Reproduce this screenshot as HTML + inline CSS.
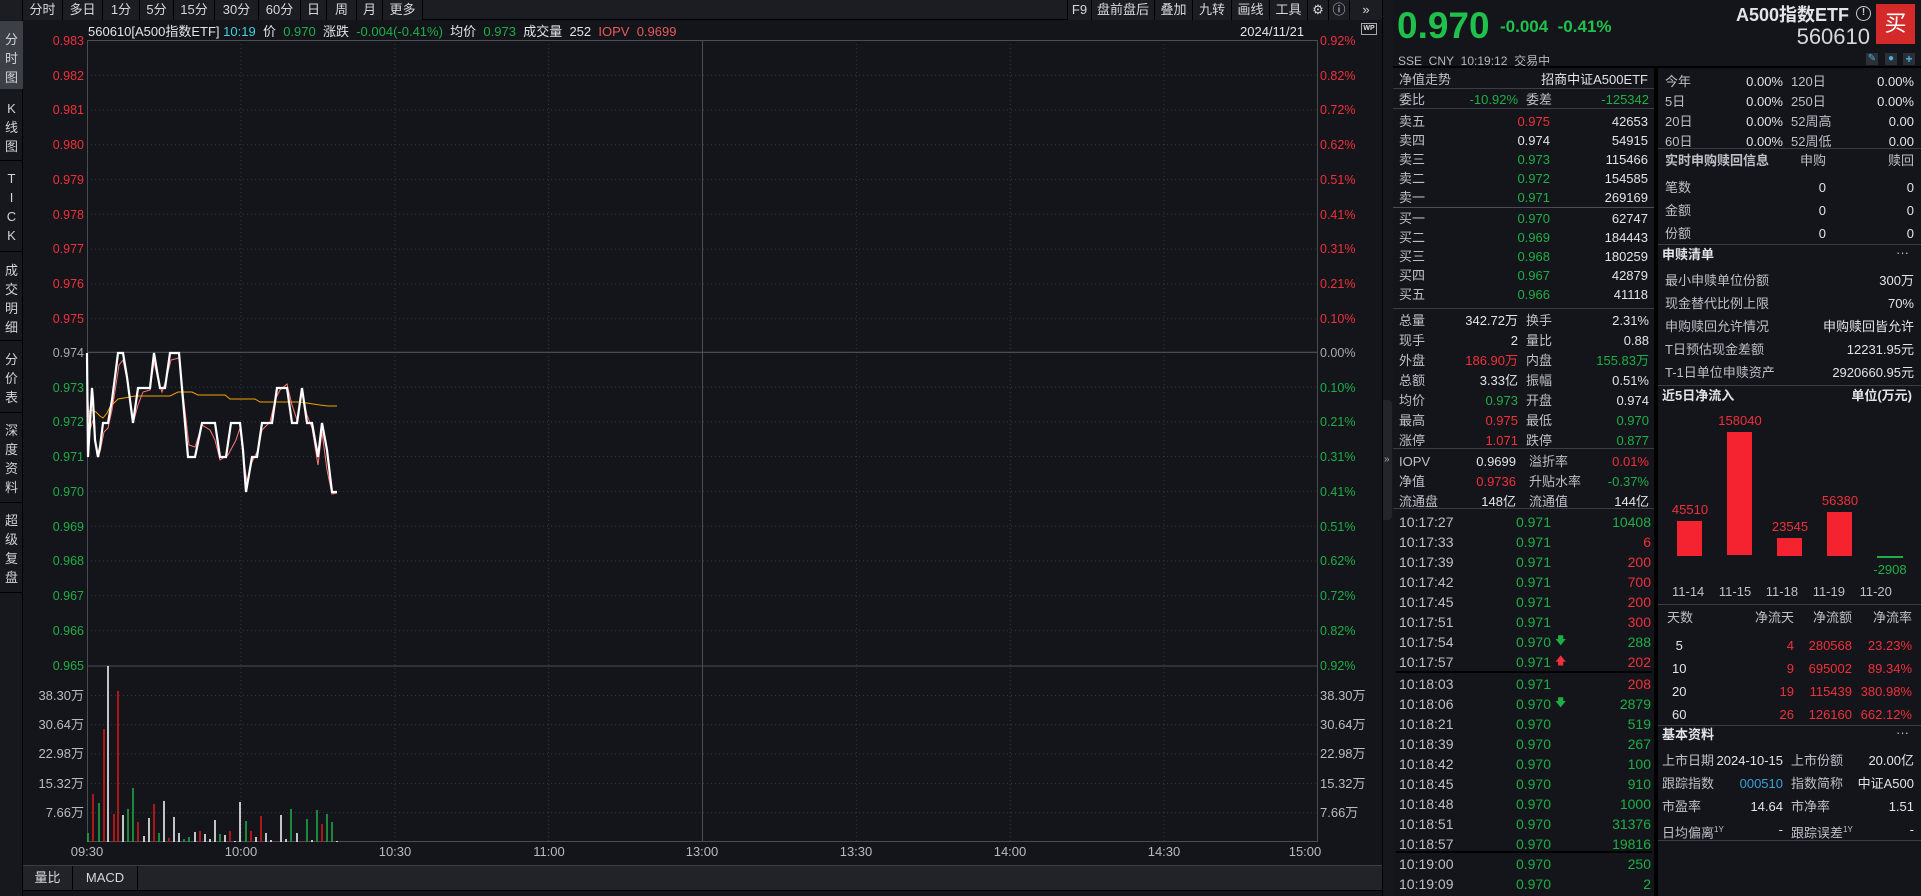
<!DOCTYPE html>
<html><head><meta charset="utf-8">
<style>
*{margin:0;padding:0;box-sizing:border-box}
body{width:1921px;height:896px;background:#13151a;position:relative;overflow:hidden;font-family:"Liberation Sans","Noto Sans CJK SC",sans-serif;color:#c9ccd2;font-size:13px}
.a{position:absolute;white-space:nowrap;line-height:16px}
.g{color:#1fae46}.r{color:#f0303a}.w{color:#e2e4e8}.l{color:#bcc0c7}
.hl{position:absolute;height:1px;background:#3a3d44}
.t{font-size:14px}
.nav{position:absolute;left:0;width:23px;text-align:center;color:#d0d3d8;font-size:13px}
.tb{position:absolute;top:0;height:20px;line-height:20px;text-align:center;border-right:1px solid #000;color:#d6d8dc;font-size:13px;background:#1b1d22;white-space:nowrap;overflow:visible}
</style></head><body>
<div style="position:absolute;left:0;top:0;width:1383px;height:20px;background:#1b1d22;border-bottom:1px solid #000"></div>
<div class="tb" style="left:0;width:23px"></div>
<div class="tb" style="left:23px;width:40px">分时</div>
<div class="tb" style="left:63px;width:40px">多日</div>
<div class="tb" style="left:103px;width:37px">1分</div>
<div class="tb" style="left:140px;width:34px">5分</div>
<div class="tb" style="left:174px;width:41px">15分</div>
<div class="tb" style="left:215px;width:44px">30分</div>
<div class="tb" style="left:259px;width:42px">60分</div>
<div class="tb" style="left:301px;width:26px">日</div>
<div class="tb" style="left:327px;width:30px">周</div>
<div class="tb" style="left:357px;width:26px">月</div>
<div class="tb" style="left:383px;width:40px">更多</div>
<div class="tb" style="left:1067px;width:25px;border-left:1px solid #000">F9</div>
<div class="tb" style="left:1092px;width:63px">盘前盘后</div>
<div class="tb" style="left:1155px;width:38px">叠加</div>
<div class="tb" style="left:1193px;width:39px">九转</div>
<div class="tb" style="left:1232px;width:38px">画线</div>
<div class="tb" style="left:1270px;width:38px">工具</div>
<div class="tb" style="left:1308px;width:21px">⚙</div>
<div class="tb" style="left:1329px;width:21px">ⓘ</div>
<div class="tb" style="left:1350px;width:33px">»</div>
<div style="position:absolute;left:0;top:20px;width:23px;height:876px;background:#16181d;border-right:1px solid #000"></div>
<div style="position:absolute;left:0;top:21px;width:23px;height:68px;background:#3c3f46"></div>
<div class="nav" style="top:30px;line-height:19px">分<br>时<br>图</div>
<div class="nav" style="top:99px;line-height:19px">K<br>线<br>图</div>
<div class="nav" style="top:169px;line-height:19px">T<br>I<br>C<br>K</div>
<div class="nav" style="top:261px;line-height:19px">成<br>交<br>明<br>细</div>
<div class="nav" style="top:350px;line-height:19px">分<br>价<br>表</div>
<div class="nav" style="top:421px;line-height:19px">深<br>度<br>资<br>料</div>
<div class="nav" style="top:511px;line-height:19px">超<br>级<br>复<br>盘</div>
<div class="hl" style="left:0;width:23px;top:160px;background:#000"></div>
<div class="hl" style="left:0;width:23px;top:251px;background:#000"></div>
<div class="hl" style="left:0;width:23px;top:340px;background:#000"></div>
<div class="hl" style="left:0;width:23px;top:412px;background:#000"></div>
<div class="hl" style="left:0;width:23px;top:502px;background:#000"></div>
<div class="hl" style="left:0;width:23px;top:592px;background:#000"></div>
<div class="a" style="left:88px;top:24px">
<span class="w">560610[A500指数ETF]</span> <span style="color:#3fd3e0">10:19</span>&nbsp; <span class="w">价</span>&nbsp; <span class="g">0.970</span>&nbsp; <span class="w">涨跌</span>&nbsp; <span class="g">-0.004(-0.41%)</span>&nbsp; <span class="w">均价</span>&nbsp; <span class="g">0.973</span>&nbsp; <span class="w">成交量</span>&nbsp; <span class="w">252</span>&nbsp; <span style="color:#e85a5a">IOPV</span>&nbsp; <span style="color:#e85a5a">0.9699</span></div>
<div class="a w" style="left:1240px;top:24px;font-size:13px">2024/11/21</div>
<div class="a" style="left:1361px;top:23px;width:16px;height:12px;border:1px solid #aaa;font-size:7px;line-height:10px;text-align:center;color:#ddd;font-weight:bold">WP</div>
<svg style="position:absolute;left:0;top:0" width="1383" height="896" font-family="Liberation Sans" font-size="12">
<g stroke="#34373e" stroke-dasharray="1,3" stroke-width="1">
<line x1="87" y1="75.2" x2="1317" y2="75.2"/><line x1="87" y1="110" x2="1317" y2="110"/><line x1="87" y1="144.7" x2="1317" y2="144.7"/><line x1="87" y1="179.5" x2="1317" y2="179.5"/><line x1="87" y1="214.3" x2="1317" y2="214.3"/><line x1="87" y1="249.1" x2="1317" y2="249.1"/><line x1="87" y1="283.9" x2="1317" y2="283.9"/><line x1="87" y1="318.7" x2="1317" y2="318.7"/>
<line x1="87" y1="387.1" x2="1317" y2="387.1"/><line x1="87" y1="421.9" x2="1317" y2="421.9"/><line x1="87" y1="456.6" x2="1317" y2="456.6"/><line x1="87" y1="491.4" x2="1317" y2="491.4"/><line x1="87" y1="526.2" x2="1317" y2="526.2"/><line x1="87" y1="561" x2="1317" y2="561"/><line x1="87" y1="595.8" x2="1317" y2="595.8"/><line x1="87" y1="630.6" x2="1317" y2="630.6"/>
<line x1="87" y1="695.5" x2="1317" y2="695.5"/><line x1="87" y1="724.8" x2="1317" y2="724.8"/><line x1="87" y1="754" x2="1317" y2="754"/><line x1="87" y1="783.4" x2="1317" y2="783.4"/><line x1="87" y1="812.7" x2="1317" y2="812.7"/>
<line x1="240.9" y1="40" x2="240.9" y2="842"/><line x1="394.8" y1="40" x2="394.8" y2="842"/><line x1="548.6" y1="40" x2="548.6" y2="842"/><line x1="856.4" y1="40" x2="856.4" y2="842"/><line x1="1010.3" y1="40" x2="1010.3" y2="842"/><line x1="1164.1" y1="40" x2="1164.1" y2="842"/>
</g>
<g stroke="#4a4d54" fill="none"><rect x="87.5" y="40.5" width="1230" height="801"/><line x1="87" y1="666" x2="1317" y2="666"/><line x1="702.5" y1="40" x2="702.5" y2="842"/><line x1="87" y1="352.3" x2="1317" y2="352.3" stroke="#5a5d64"/></g>
<g text-anchor="end" font-size="12.5">
<text x="84" y="45" fill="#f0303a">0.983</text><text x="84" y="80" fill="#f0303a">0.982</text><text x="84" y="114" fill="#f0303a">0.981</text><text x="84" y="149" fill="#f0303a">0.980</text><text x="84" y="184" fill="#f0303a">0.979</text><text x="84" y="219" fill="#f0303a">0.978</text><text x="84" y="253" fill="#f0303a">0.977</text><text x="84" y="288" fill="#f0303a">0.976</text><text x="84" y="323" fill="#f0303a">0.975</text><text x="84" y="357" fill="#a8abb0">0.974</text>
<text x="84" y="392" fill="#1fae46">0.973</text><text x="84" y="426" fill="#1fae46">0.972</text><text x="84" y="461" fill="#1fae46">0.971</text><text x="84" y="496" fill="#1fae46">0.970</text><text x="84" y="531" fill="#1fae46">0.969</text><text x="84" y="565" fill="#1fae46">0.968</text><text x="84" y="600" fill="#1fae46">0.967</text><text x="84" y="635" fill="#1fae46">0.966</text><text x="84" y="670" fill="#1fae46">0.965</text>
<g fill="#b8bcc2" font-size="13"><text x="84" y="700">38.30万</text><text x="84" y="729">30.64万</text><text x="84" y="758">22.98万</text><text x="84" y="788">15.32万</text><text x="84" y="817">7.66万</text></g>
</g>
<g font-size="12.5">
<g fill="#f0303a"><text x="1320" y="45">0.92%</text><text x="1320" y="80">0.82%</text><text x="1320" y="114">0.72%</text><text x="1320" y="149">0.62%</text><text x="1320" y="184">0.51%</text><text x="1320" y="219">0.41%</text><text x="1320" y="253">0.31%</text><text x="1320" y="288">0.21%</text><text x="1320" y="323">0.10%</text></g>
<text x="1320" y="357" fill="#a8abb0">0.00%</text>
<g fill="#1fae46"><text x="1320" y="392">0.10%</text><text x="1320" y="426">0.21%</text><text x="1320" y="461">0.31%</text><text x="1320" y="496">0.41%</text><text x="1320" y="531">0.51%</text><text x="1320" y="565">0.62%</text><text x="1320" y="600">0.72%</text><text x="1320" y="635">0.82%</text><text x="1320" y="670">0.92%</text></g>
<g fill="#b8bcc2" font-size="13"><text x="1320" y="700">38.30万</text><text x="1320" y="729">30.64万</text><text x="1320" y="758">22.98万</text><text x="1320" y="788">15.32万</text><text x="1320" y="817">7.66万</text></g>
<g fill="#b8bcc2" text-anchor="middle" font-size="13"><text x="87" y="856">09:30</text><text x="241" y="856">10:00</text><text x="395" y="856">10:30</text><text x="549" y="856">11:00</text><text x="702" y="856">13:00</text><text x="856" y="856">13:30</text><text x="1010" y="856">14:00</text><text x="1164" y="856">14:30</text><text x="1305" y="856">15:00</text></g>
</g>
<polyline fill="none" stroke="#f5a000" stroke-width="1" points="88,412 92,410 96,412 100,416 103,418 107,413 110,407 114,403 118,399 124,398 130,397 135,396 150,396 170,396 178,392 192,392 198,395 225,395 230,399 255,399 260,402 300,402 320,405 328,406 337,406"/>
<polyline fill="none" stroke="#ff7777" stroke-width="1" points="88,400 90,430 93,420 97,455 100,452 104,432 108,428 112,410 116,385 119,365 123,360 127,380 131,410 134,420 138,405 143,392 150,390 154,362 158,380 162,392 166,380 171,360 179,358 184,402 189,445 195,447 202,425 210,430 215,440 220,460 228,455 236,440 240,428 243,455 247,482 252,462 258,450 262,430 270,422 275,400 280,390 287,384 292,405 297,420 302,393 307,415 312,428 318,465 322,432 327,470 332,494 337,493"/>
<polyline fill="none" stroke="#ffffff" stroke-width="2.2" stroke-linejoin="miter" points="87,353 88,457 92,388 93,400 95,440 98,457 100,447 103,423 108,423 112,400 115,377 118,353 123,353 127,377 130,400 133,423 138,388 150,388 154,353 158,377 160,388 165,388 170,353 179,353 183,400 188,457 195,457 202,423 215,423 220,457 226,457 231,423 240,423 243,450 246,492 252,457 257,457 262,423 272,423 277,388 287,388 292,423 297,423 302,388 307,423 312,423 318,457 322,423 327,450 332,492 337,492"/>
<g stroke-width="1.5">
<line x1="88" y1="842" x2="88" y2="833" stroke="#1fae46"/><line x1="93" y1="842" x2="93" y2="794" stroke="#e01818"/><line x1="99" y1="842" x2="99" y2="803" stroke="#1fae46"/><line x1="104" y1="842" x2="104" y2="729" stroke="#e01818"/><line x1="108" y1="842" x2="108" y2="666" stroke="#fff"/><line x1="114" y1="842" x2="114" y2="814" stroke="#e01818"/><line x1="118" y1="842" x2="118" y2="691" stroke="#e01818"/><line x1="123" y1="842" x2="123" y2="815" stroke="#fff"/><line x1="128" y1="842" x2="128" y2="809" stroke="#1fae46"/><line x1="133" y1="842" x2="133" y2="788" stroke="#1fae46"/><line x1="138" y1="842" x2="138" y2="822" stroke="#e01818"/><line x1="144" y1="842" x2="144" y2="836" stroke="#fff"/><line x1="149" y1="842" x2="149" y2="818" stroke="#fff"/><line x1="154" y1="842" x2="154" y2="804" stroke="#e01818"/><line x1="159" y1="842" x2="159" y2="833" stroke="#1fae46"/><line x1="164" y1="842" x2="164" y2="801" stroke="#fff"/><line x1="169" y1="842" x2="169" y2="838" stroke="#e01818"/><line x1="174" y1="842" x2="174" y2="817" stroke="#fff"/><line x1="179" y1="842" x2="179" y2="833" stroke="#fff"/><line x1="184" y1="842" x2="184" y2="839" stroke="#1fae46"/><line x1="189" y1="842" x2="189" y2="837" stroke="#1fae46"/><line x1="195" y1="842" x2="195" y2="832" stroke="#fff"/><line x1="200" y1="842" x2="200" y2="831" stroke="#e01818"/><line x1="205" y1="842" x2="205" y2="834" stroke="#fff"/><line x1="210" y1="842" x2="210" y2="839" stroke="#fff"/><line x1="215" y1="842" x2="215" y2="820" stroke="#fff"/><line x1="220" y1="842" x2="220" y2="834" stroke="#1fae46"/><line x1="225" y1="842" x2="225" y2="835" stroke="#fff"/><line x1="230" y1="842" x2="230" y2="831" stroke="#e01818"/><line x1="235" y1="842" x2="235" y2="841" stroke="#fff"/><line x1="240" y1="842" x2="240" y2="802" stroke="#fff"/><line x1="246" y1="842" x2="246" y2="821" stroke="#1fae46"/><line x1="251" y1="842" x2="251" y2="831" stroke="#e01818"/><line x1="256" y1="842" x2="256" y2="837" stroke="#fff"/><line x1="261" y1="842" x2="261" y2="816" stroke="#e01818"/><line x1="266" y1="842" x2="266" y2="833" stroke="#fff"/><line x1="271" y1="842" x2="271" y2="840" stroke="#fff"/><line x1="276" y1="842" x2="276" y2="841" stroke="#e01818"/><line x1="281" y1="842" x2="281" y2="815" stroke="#fff"/><line x1="286" y1="842" x2="286" y2="839" stroke="#fff"/><line x1="291" y1="842" x2="291" y2="809" stroke="#1fae46"/><line x1="297" y1="842" x2="297" y2="833" stroke="#fff"/><line x1="302" y1="842" x2="302" y2="841" stroke="#e01818"/><line x1="307" y1="842" x2="307" y2="819" stroke="#1fae46"/><line x1="312" y1="842" x2="312" y2="840" stroke="#fff"/><line x1="317" y1="842" x2="317" y2="810" stroke="#1fae46"/><line x1="322" y1="842" x2="322" y2="824" stroke="#e01818"/><line x1="327" y1="842" x2="327" y2="814" stroke="#1fae46"/><line x1="332" y1="842" x2="332" y2="822" stroke="#1fae46"/><line x1="337" y1="842" x2="337" y2="841" stroke="#fff"/>
</g>
</svg>
<div style="position:absolute;left:23px;top:865px;width:1359px;height:26px;background:#222328;border-top:1px solid #3a3d44;border-bottom:1px solid #000"></div>
<div class="a" style="left:23px;top:866px;width:50px;height:24px;line-height:24px;text-align:center;border-right:1px solid #000;color:#d6d8dc">量比</div>
<div class="a" style="left:73px;top:866px;width:65px;height:24px;line-height:24px;text-align:center;border-right:1px solid #000;color:#d6d8dc">MACD</div>
<div style="position:absolute;left:1382px;top:0;width:11px;height:896px;background:#15171c;border-left:1px solid #000"></div>
<div style="position:absolute;left:1383px;top:400px;width:9px;height:120px;background:#23252b;border-radius:0 4px 4px 0"></div>
<div class="a" style="left:1384px;top:452px;font-size:10px;color:#aaa">»</div>
<div style="position:absolute;left:1654px;top:68px;width:4px;height:828px;background:#000"></div>
<div class="a g" style="left:1397px;top:6px;font-size:37px;line-height:40px;font-weight:bold;color:#1fc04c">0.970</div>
<div class="a g" style="left:1500px;top:17px;font-size:17px;line-height:20px;font-weight:bold;color:#1fc04c">-0.004&nbsp; -0.41%</div>
<div class="a w" style="right:72px;top:5px;font-size:18px;line-height:20px;font-weight:bold">A500指数ETF</div>
<div class="a" style="left:1856px;top:6px;width:15px;height:15px;border:1.5px solid #ccc;border-radius:50%;font-size:10px;line-height:12px;text-align:center;color:#ccc;font-weight:bold">!</div>
<div class="a" style="right:51px;top:25px;font-size:22px;line-height:24px;color:#d6d8dc">560610</div>
<div class="a" style="left:1876px;top:4px;width:39px;height:40px;background:#d42a2a;color:#fff;font-size:22px;line-height:40px;text-align:center">买</div>
<div class="a" style="left:1398px;top:53px;font-size:12px;color:#b4b8be">SSE&nbsp; CNY&nbsp; 10:19:12&nbsp; 交易中</div>
<div class="a" style="left:1866px;top:53px;width:12px;height:12px;background:#2b3036;color:#4ab0e0;font-size:10px;line-height:12px;text-align:center">✎</div>
<div class="a" style="left:1885px;top:53px;width:12px;height:12px;background:#2b3036;color:#4ab0e0;font-size:10px;line-height:12px;text-align:center">●</div>
<div class="a" style="left:1903px;top:53px;width:12px;height:12px;background:#2b3036;color:#4ab0e0;font-size:12px;line-height:12px;text-align:center;font-weight:bold">+</div>
<div style="position:absolute;left:1393px;top:66px;width:528px;height:2px;background:#000"></div>
<div class="a l" style="left:1399px;top:72px">净值走势</div><div class="a w" style="right:273px;top:72px">招商中证A500ETF</div>
<div class="hl" style="left:1393px;width:261px;top:88px"></div>
<div class="a l" style="left:1399px;top:92px">委比</div><div class="a g" style="right:403px;top:92px">-10.92%</div><div class="a l" style="left:1526px;top:92px">委差</div><div class="a g" style="right:272px;top:92px">-125342</div>
<div class="hl" style="left:1393px;width:261px;top:108px"></div>
<div class="a l" style="left:1399px;top:112px;line-height:19px">卖五<br>卖四<br>卖三<br>卖二<br>卖一</div>
<div class="a" style="right:371px;top:112px;line-height:19px;text-align:right"><span class="r">0.975</span><br><span class="w">0.974</span><br><span class="g">0.973</span><br><span class="g">0.972</span><br><span class="g">0.971</span></div>
<div class="a w" style="right:273px;top:112px;line-height:19px;text-align:right">42653<br>54915<br>115466<br>154585<br>269169</div>
<div class="hl" style="left:1393px;width:261px;top:207px;background:#4a4d54"></div>
<div class="a l" style="left:1399px;top:209px;line-height:19px">买一<br>买二<br>买三<br>买四<br>买五</div>
<div class="a g" style="right:371px;top:209px;line-height:19px;text-align:right">0.970<br>0.969<br>0.968<br>0.967<br>0.966</div>
<div class="a w" style="right:273px;top:209px;line-height:19px;text-align:right">62747<br>184443<br>180259<br>42879<br>41118</div>
<div class="hl" style="left:1393px;width:261px;top:308px"></div>
<div class="a l" style="left:1399px;top:311px;line-height:20px">总量<br>现手<br>外盘<br>总额<br>均价<br>最高<br>涨停</div>
<div class="a" style="right:403px;top:311px;line-height:20px;text-align:right"><span class="w">342.72万</span><br><span class="w">2</span><br><span class="r">186.90万</span><br><span class="w">3.33亿</span><br><span class="g">0.973</span><br><span class="r">0.975</span><br><span class="r">1.071</span></div>
<div class="a l" style="left:1526px;top:311px;line-height:20px">换手<br>量比<br>内盘<br>振幅<br>开盘<br>最低<br>跌停</div>
<div class="a" style="right:272px;top:311px;line-height:20px;text-align:right"><span class="w">2.31%</span><br><span class="w">0.88</span><br><span class="g">155.83万</span><br><span class="w">0.51%</span><br><span class="w">0.974</span><br><span class="g">0.970</span><br><span class="g">0.877</span></div>
<div class="hl" style="left:1393px;width:261px;top:448px"></div>
<div class="a l" style="left:1399px;top:452px;line-height:20px">IOPV<br>净值<br>流通盘</div>
<div class="a" style="right:405px;top:452px;line-height:20px;text-align:right"><span class="w">0.9699</span><br><span class="r">0.9736</span><br><span class="w">148亿</span></div>
<div class="a l" style="left:1529px;top:452px;line-height:20px">溢折率<br>升贴水率<br>流通值</div>
<div class="a" style="right:272px;top:452px;line-height:20px;text-align:right"><span class="r">0.01%</span><br><span class="g">-0.37%</span><br><span class="w">144亿</span></div>
<div class="hl" style="left:1393px;width:261px;top:508px"></div>
<div class="a t l" style="left:1399px;top:512px;line-height:20px">10:17:27<br>10:17:33<br>10:17:39<br>10:17:42<br>10:17:45<br>10:17:51<br>10:17:54<br>10:17:57</div>
<div class="a t g" style="right:370px;top:512px;line-height:20px;text-align:right">0.971<br>0.971<br>0.971<br>0.971<br>0.971<br>0.971<br>0.970<br>0.971</div>
<div class="a" style="left:1555px;top:633px;font-size:11px;color:#1fae46">🡇</div>
<div class="a" style="left:1555px;top:653px;font-size:11px;color:#f0303a">🡅</div>
<div class="a t" style="right:270px;top:512px;line-height:20px;text-align:right"><span class="g">10408</span><br><span class="r">6</span><br><span class="r">200</span><br><span class="r">700</span><br><span class="r">200</span><br><span class="r">300</span><br><span class="g">288</span><br><span class="r">202</span></div>
<div class="hl" style="left:1396px;width:256px;top:671px;background:#000;height:2px"></div>
<div class="a t l" style="left:1399px;top:674px;line-height:20px">10:18:03<br>10:18:06<br>10:18:21<br>10:18:39<br>10:18:42<br>10:18:45<br>10:18:48<br>10:18:51<br>10:18:57</div>
<div class="a t g" style="right:370px;top:674px;line-height:20px;text-align:right">0.971<br>0.970<br>0.970<br>0.970<br>0.970<br>0.970<br>0.970<br>0.970<br>0.970</div>
<div class="a" style="left:1555px;top:695px;font-size:11px;color:#1fae46">🡇</div>
<div class="a t" style="right:270px;top:674px;line-height:20px;text-align:right"><span class="r">208</span><br><span class="g">2879</span><br><span class="g">519</span><br><span class="g">267</span><br><span class="g">100</span><br><span class="g">910</span><br><span class="g">1000</span><br><span class="g">31376</span><br><span class="g">19816</span></div>
<div class="hl" style="left:1396px;width:256px;top:851px;background:#000;height:2px"></div>
<div class="a t l" style="left:1399px;top:854px;line-height:20px">10:19:00<br>10:19:09</div>
<div class="a t g" style="right:370px;top:854px;line-height:20px;text-align:right">0.970<br>0.970</div>
<div class="a t g" style="right:270px;top:854px;line-height:20px;text-align:right">250<br>2</div>
<div class="a l" style="left:1665px;top:72px;line-height:20px">今年<br>5日<br>20日<br>60日</div>
<div class="a w" style="right:138px;top:72px;line-height:20px;text-align:right">0.00%<br>0.00%<br>0.00%<br>0.00%</div>
<div class="a l" style="left:1791px;top:72px;line-height:20px">120日<br>250日<br>52周高<br>52周低</div>
<div class="a w" style="right:7px;top:72px;line-height:20px;text-align:right">0.00%<br>0.00%<br>0.00<br>0.00</div>
<div class="hl" style="left:1658px;width:263px;top:148px"></div>
<div class="a l" style="left:1665px;top:153px;font-weight:bold">实时申购赎回信息</div><div class="a l" style="right:95px;top:153px">申购</div><div class="a l" style="right:7px;top:153px">赎回</div>
<div class="a l" style="left:1665px;top:176px;line-height:23px">笔数<br>金额<br>份额</div>
<div class="a w" style="right:95px;top:176px;line-height:23px;text-align:right">0<br>0<br>0</div>
<div class="a w" style="right:7px;top:176px;line-height:23px;text-align:right">0<br>0<br>0</div>
<div class="hl" style="left:1658px;width:263px;top:244px"></div>
<div class="a w" style="left:1662px;top:247px;font-weight:bold">申赎清单</div><div class="a l" style="left:1896px;top:245px">···</div>
<div class="a l" style="left:1665px;top:269px;line-height:23px">最小申赎单位份额<br>现金替代比例上限<br>申购赎回允许情况<br>T日预估现金差额<br>T-1日单位申赎资产</div>
<div class="a w" style="right:7px;top:269px;line-height:23px;text-align:right">300万<br>70%<br>申购赎回皆允许<br>12231.95元<br>2920660.95元</div>
<div class="hl" style="left:1658px;width:263px;top:385px"></div>
<div class="a w" style="left:1662px;top:388px;font-weight:bold">近5日净流入</div><div class="a w" style="right:9px;top:388px;font-weight:bold">单位(万元)</div>
<div style="position:absolute;left:1677px;top:521px;width:25px;height:35px;background:#f4232f"></div>
<div style="position:absolute;left:1727px;top:432px;width:25px;height:123px;background:#f4232f"></div>
<div style="position:absolute;left:1777px;top:538px;width:25px;height:18px;background:#f4232f"></div>
<div style="position:absolute;left:1827px;top:512px;width:25px;height:44px;background:#f4232f"></div>
<div style="position:absolute;left:1877px;top:556px;width:26px;height:2px;background:#1fae46"></div>
<div class="a r" style="left:1670px;top:502px;width:40px;text-align:center">45510</div>
<div class="a r" style="left:1715px;top:413px;width:50px;text-align:center">158040</div>
<div class="a r" style="left:1770px;top:519px;width:40px;text-align:center">23545</div>
<div class="a r" style="left:1820px;top:493px;width:40px;text-align:center">56380</div>
<div class="a g" style="left:1870px;top:562px;width:40px;text-align:center">-2908</div>
<div class="a l" style="left:1672px;top:584px;word-spacing:11px">11-14 11-15 11-18 11-19 11-20</div>
<div class="hl" style="left:1658px;width:263px;top:604px"></div>
<div class="a l" style="left:1667px;top:610px">天数</div><div class="a l" style="right:127px;top:610px">净流天</div><div class="a l" style="right:69px;top:610px">净流额</div><div class="a l" style="right:9px;top:610px">净流率</div>
<div class="a w" style="left:1672px;top:634px;line-height:23px">&nbsp;5<br>10<br>20<br>60</div>
<div class="a r" style="right:127px;top:634px;line-height:23px;text-align:right">4<br>9<br>19<br>26</div>
<div class="a r" style="right:69px;top:634px;line-height:23px;text-align:right">280568<br>695002<br>115439<br>126160</div>
<div class="a r" style="right:9px;top:634px;line-height:23px;text-align:right">23.23%<br>89.34%<br>380.98%<br>662.12%</div>
<div class="hl" style="left:1658px;width:263px;top:725px"></div>
<div class="a w" style="left:1662px;top:727px;font-weight:bold">基本资料</div><div class="a l" style="left:1896px;top:725px">···</div>
<div class="a l" style="left:1662px;top:749px;line-height:23px">上市日期<br>跟踪指数<br>市盈率<br>日均偏离<sup style="font-size:8px">1Y</sup></div>
<div class="a" style="right:138px;top:749px;line-height:23px;text-align:right"><span class="w">2024-10-15</span><br><span style="color:#3aa0d8">000510</span><br><span class="w">14.64</span><br><span class="w">-</span></div>
<div class="a l" style="left:1791px;top:749px;line-height:23px">上市份额<br>指数简称<br>市净率<br>跟踪误差<sup style="font-size:8px">1Y</sup></div>
<div class="a w" style="right:7px;top:749px;line-height:23px;text-align:right">20.00亿<br>中证A500<br>1.51<br>-</div>
<div class="hl" style="left:1658px;width:263px;top:840px"></div>
</body></html>
